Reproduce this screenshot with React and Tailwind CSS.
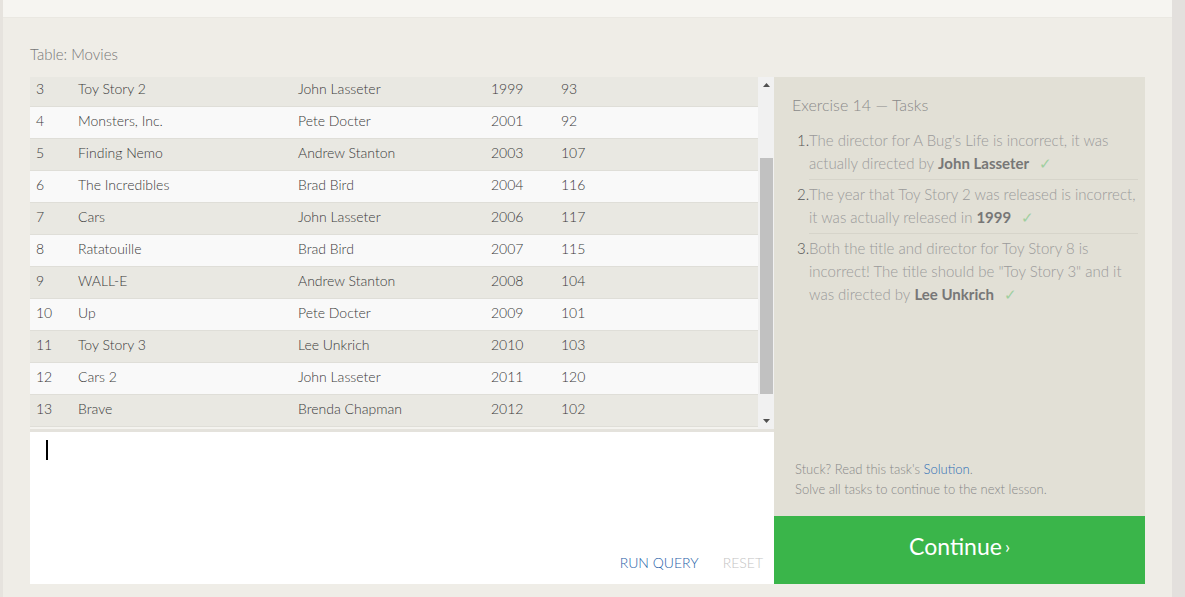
import React from "react";

const movies = [
  { id: 3, title: "Toy Story 2", director: "John Lasseter", year: 1999, length: 93 },
  { id: 4, title: "Monsters, Inc.", director: "Pete Docter", year: 2001, length: 92 },
  { id: 5, title: "Finding Nemo", director: "Andrew Stanton", year: 2003, length: 107 },
  { id: 6, title: "The Incredibles", director: "Brad Bird", year: 2004, length: 116 },
  { id: 7, title: "Cars", director: "John Lasseter", year: 2006, length: 117 },
  { id: 8, title: "Ratatouille", director: "Brad Bird", year: 2007, length: 115 },
  { id: 9, title: "WALL-E", director: "Andrew Stanton", year: 2008, length: 104 },
  { id: 10, title: "Up", director: "Pete Docter", year: 2009, length: 101 },
  { id: 11, title: "Toy Story 3", director: "Lee Unkrich", year: 2010, length: 103 },
  { id: 12, title: "Cars 2", director: "John Lasseter", year: 2011, length: 120 },
  { id: 13, title: "Brave", director: "Brenda Chapman", year: 2012, length: 102 },
];

// each task: plain lines, then the last line's lead text + bold answer
const tasks = [
  { lines: ["The director for A Bug's Life is incorrect, it was"], lead: "actually directed by", answer: "John Lasseter" },
  { lines: ["The year that Toy Story 2 was released is incorrect,"], lead: "it was actually released in", answer: "1999" },
  {
    lines: ["Both the title and director for Toy Story 8 is", 'incorrect! The title should be "Toy Story 3" and it'],
    lead: "was directed by",
    answer: "Lee Unkrich",
  },
];

function MovieRow({ movie, index }) {
  const odd = index % 2 === 0;
  return (
    <div
      className={`flex items-center border-b border-[#dfded8] text-[14px] font-light text-[#3a3a3a] ${
        index === 0 ? "h-[30px] pb-[6px]" : "h-[32px] pb-[4px]"
      } ${odd ? "bg-[#e9e8e2]" : "bg-[#f9f9f9]"}`}
    >
      <div className="w-[48px] pl-[6px]">{movie.id}</div>
      <div className="w-[220px]">{movie.title}</div>
      <div className="w-[193px]">{movie.director}</div>
      <div className="w-[70px]">{movie.year}</div>
      <div>{movie.length}</div>
    </div>
  );
}

function Task({ n, task, last }) {
  return (
    <li className={`flex pb-[4px] pt-[3px] ${last ? "" : "border-b border-[#d6d4ca]"}`}>
      <span className="-ml-[12px] w-[12px] shrink-0 text-[#555]">{n}.</span>
      <div className="flex flex-col whitespace-nowrap">
        {task.lines.map((line) => (
          <div key={line}>{line}</div>
        ))}
        <div className="flex gap-[4px]">
          <span>{task.lead}</span>
          <span className="font-bold text-[#777]">{task.answer}</span>
          <span className="ml-[6px] text-[#9fcf9f]">✓</span>
        </div>
      </div>
    </li>
  );
}

export default function App() {
  return (
    <div
      className="flex h-[597px] w-full bg-[#efede7]"
      style={{ fontFamily: "Lato, 'Open Sans', sans-serif" }}
    >
      <div className="w-[3px] bg-[#e6e3de]" />
      <div className="flex flex-1 flex-col">
        <div className="h-[18px] border-b border-[#eae8e2] bg-[#f6f5f1]" />
        <div className="pl-[27px] pt-[26px]">
          <div className="mb-[13px] text-[15px] font-light leading-[20px] text-[#777]">Table: Movies</div>
          <div className="flex">
            <div className="flex w-[744px] flex-col">
              <div className="flex h-[355px] border-b-[3px] border-[#e4e2dc] bg-[#f4f3ef]">
                <div className="flex-1 overflow-hidden">
                  {movies.map((m, i) => (
                    <MovieRow key={m.id} movie={m} index={i} />
                  ))}
                </div>
                <div className="flex w-[16px] flex-col items-center bg-[#f1f1f1]">
                  <div className="flex h-[16px] items-center justify-center">
                    <svg width="7" height="4" viewBox="0 0 7 4">
                      <path d="M0 4 L3.5 0 L7 4 Z" fill="#505050" />
                    </svg>
                  </div>
                  <div className="mt-[65px] h-[236px] w-[13px] bg-[#c1c1c1]" />
                  <div className="flex-1" />
                  <div className="flex h-[16px] items-center justify-center">
                    <svg width="7" height="4" viewBox="0 0 7 4">
                      <path d="M0 0 L3.5 4 L7 0 Z" fill="#505050" />
                    </svg>
                  </div>
                </div>
              </div>
              <div className="flex h-[152px] flex-col bg-white">
                <div className="ml-[16px] mt-[8px] h-[20px] w-[2px] bg-black" />
                <div className="flex-1" />
                <div className="flex justify-end gap-[24px] pb-[11px] pr-[11px] text-[14px] font-light uppercase">
                  <span className="text-[#1f5fa8]">Run Query</span>
                  <span className="text-[#c4c4c4]">Reset</span>
                </div>
              </div>
            </div>
            <div className="flex w-[371px] flex-col">
              <div className="flex h-[439px] flex-col bg-[#e2e0d6] pl-[18px] pr-[7px] pt-[17px]">
                <div className="text-[16px] font-light leading-[22px] text-[#8a8a8a]">Exercise 14 — Tasks</div>
                <ol className="mt-[10px] pl-[17px] text-[15px] font-light leading-[23px] text-[#9a9a9a]">
                  {tasks.map((t, i) => (
                    <Task key={i} n={i + 1} task={t} last={i === tasks.length - 1} />
                  ))}
                </ol>
                <div className="flex-1" />
                <div className="pb-[17px] pl-[3px] text-[13px] font-light leading-[20px] text-[#888]">
                  <div>
                    Stuck? Read this task's <span className="text-[#2b6cb5]">Solution</span>.
                  </div>
                  <div>Solve all tasks to continue to the next lesson.</div>
                </div>
              </div>
              <div className="flex h-[68px] items-center justify-center bg-[#3ab54a] pb-[7px] text-white">
                <span className="text-[23px]">Continue</span>
                <span className="ml-[3px] text-[18px]">›</span>
              </div>
            </div>
          </div>
        </div>
      </div>
      <div className="w-[13px] bg-[#e3e0dd]" />
    </div>
  );
}
